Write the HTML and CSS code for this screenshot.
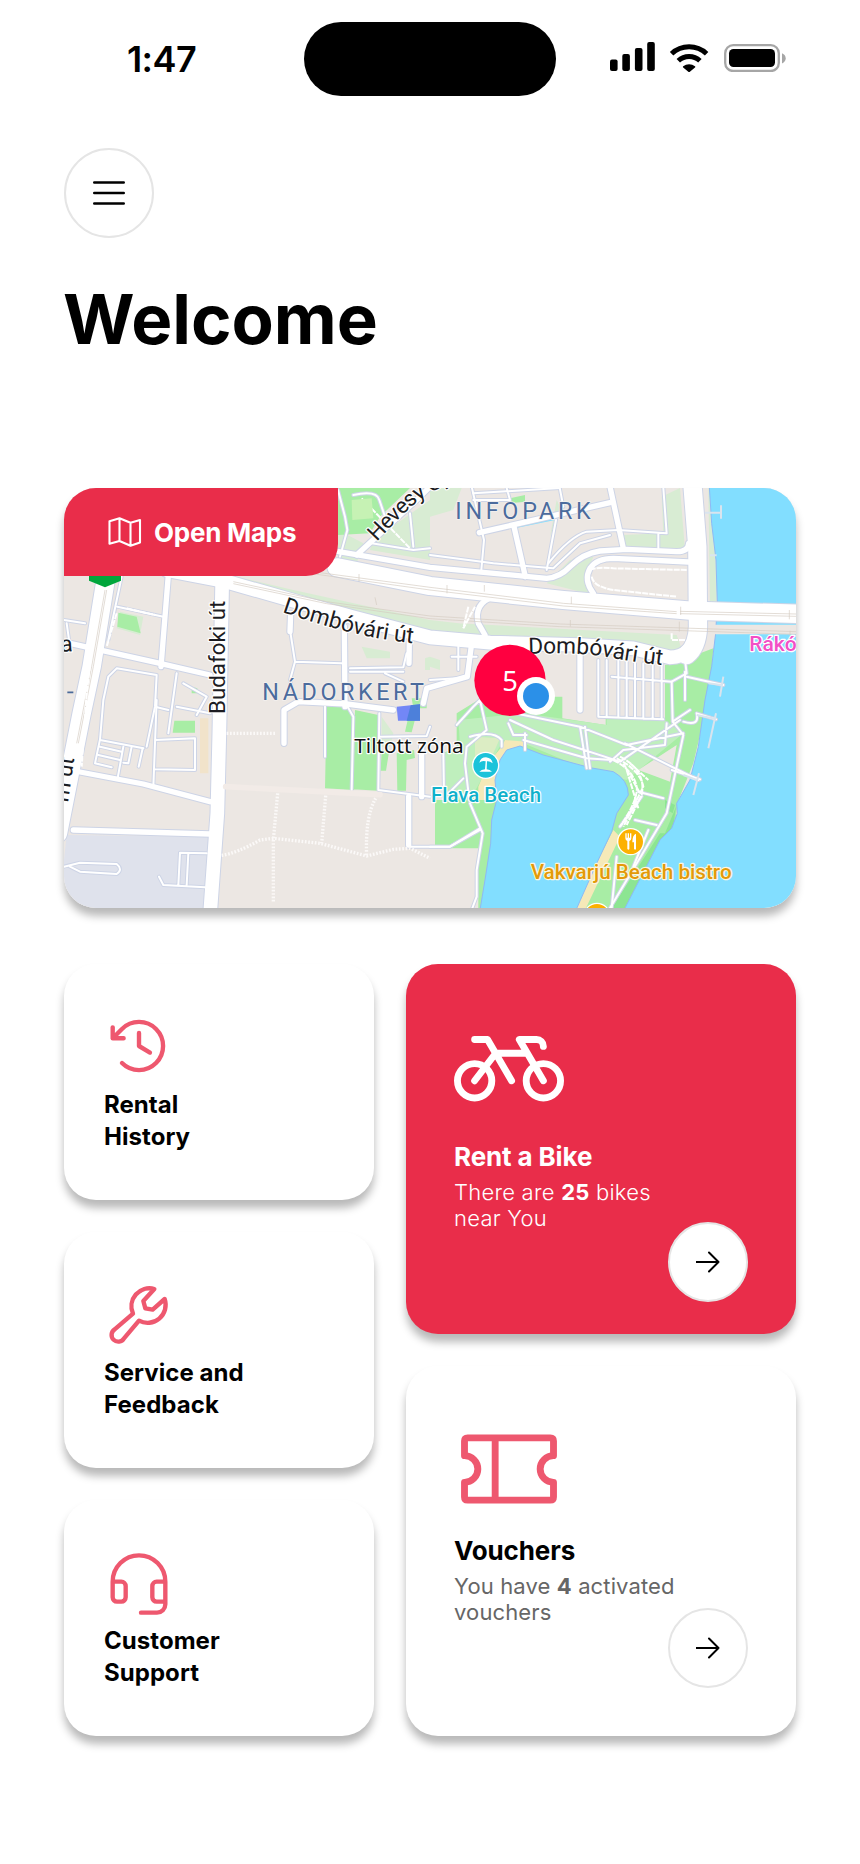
FILE: index.html
```html
<!DOCTYPE html>
<html lang="en">
<head>
<meta charset="utf-8">
<title>Welcome</title>
<link rel="stylesheet" href="styles.css">
</head>
<body>
<div class="screen">
  <header class="status">
    <span class="time">1:47</span>
    <span class="island"></span>
    <svg class="status-icons" viewBox="0 0 176 30" aria-hidden="true">
      <rect x="0" y="17.5" width="7.6" height="11.5" rx="2"/><rect x="12.3" y="12" width="7.6" height="17" rx="2"/><rect x="24.9" y="6" width="7.6" height="23" rx="2"/><rect x="37.2" y="0" width="7.6" height="29" rx="2"/>
      <g class="wifi"><path d="M61.6 11.8a25.5 25.5 0 0 1 35 0"/><path d="M68.3 18.8a15.8 15.8 0 0 1 21.6 0"/></g>
      <path d="M73.2 24.3a9.2 9.2 0 0 1 11.8 0q.6.6 0 1.2l-5.1 4.2q-.8.7-1.6 0l-5.1-4.2q-.6-.6 0-1.2z"/>
      <rect class="shell" x="115.2" y="3.2" width="53.6" height="25.8" rx="8"/><rect x="119" y="7" width="46" height="18" rx="4.5"/><path class="nub" d="M172 11.2v10.2q3.7-1.6 3.7-5.1t-3.7-5.1z"/>
    </svg>
  </header>

  <button class="round menu" aria-label="Menu">
    <svg viewBox="0 0 32 26"><path d="M1.3 2.5h29.4M1.3 13h29.4M1.3 23.5h29.4"/></svg>
  </button>
  <h1>Welcome</h1>

  <section class="map">
    <svg class="map-art" viewBox="12 24 2196 1260" preserveAspectRatio="none">
      <defs>
        <g id="streets">
          <path class="s3" d="M145 250L95 560L65 700L-6 1060"/>
          <path class="s2" d="M487 280L483 500L478 760L472 1000L451 1290"/>
          <path class="s2" d="M320 270L500 305L700 362L880 412L1110 472L1290 488L1560 495L1720 505L1830 532Q1900 530 1910 450"/>
          <path class="s3" d="M1897 10L1912 200L1914 440Q1912 500 1880 525"/>
          <path class="s3" d="M830 262L1110 318L1510 360L1890 392L2230 402"/>
          <path class="s1" d="M780 205L1110 262L1460 295Q1500 292 1530 260Q1570 220 1620 213L1700 208L1850 215Q1885 215 1886 190"/>
          <path class="s1" d="M1885 246L1660 235Q1610 235 1590 265Q1570 300 1600 340"/>
          <path class="s1" d="M890 225L1080 50L1120 10"/>
          <path class="s1" d="M1258 158L1650 68"/><path class="s1" d="M1362 140L1396 290"/><path class="s1" d="M1650 20L1690 205"/>
          <path class="s0" d="M1235 20L1272 180L1264 270"/><path class="s0" d="M1340 24L1350 60L1240 60M1240 40L1500 24"/>
          <path class="s0" d="M1500 28L1510 80M1488 120L1460 270"/>
          <path class="s0" d="M1110 225L1300 250L1480 265L1560 190L1650 165"/><path class="s0" d="M1465 250Q1530 170 1580 155L1675 150L1820 160L1810 24M1795 158L1795 205"/>
          <path class="s0" d="M834 30L855 110L862 150L840 230M880 45Q950 30 958 60L975 110M935 190L1060 210L1110 205M1050 100L1060 200"/>
          <path class="s1" d="M325 285L303 560"/><path class="s0" d="M185 290L145 480M172 380L310 410"/>
          <path class="s1" d="M30 490L290 548L450 585"/>
          <path class="s0" d="M12 420L75 430M20 430L30 500M145 590L170 565L290 585L285 680L260 800M145 590L130 660L120 780L250 805M350 580L325 760M285 680L325 690M350 680L450 700M370 610L440 650L410 705"/>
          <path class="s0" d="M120 778L105 850L155 862M120 800L185 815M115 825L180 840M190 800L172 900M215 800L205 850L190 848M248 805L236 860M290 660L280 920M285 780L405 775L405 870L285 868"/>
          <path class="s1" d="M60 876L250 912L450 965"/><path class="s1" d="M40 1050L450 1062"/>
          <path class="s0" d="M12 1160L60 1148L170 1152Q190 1168 170 1182L60 1175L30 1160M355 1215L360 1118L440 1120M385 1120L380 1215M297 1190L310 1215L435 1222"/>
          <path class="s1" d="M692 400L690 455"/><path class="s0" d="M690 450L705 545L845 550M705 545L690 600L700 640"/>
          <path class="s1" d="M853 440L855 680"/><path class="s1" d="M1048 480L1047 550"/>
          <path class="s0" d="M870 575L1030 575M870 565L1030 562L1040 520M975 580L1030 605"/>
          <path class="s1" d="M672 790L672 690L715 665L860 672L1000 690"/><path class="s0" d="M860 675L880 710L875 930"/>
          <path class="s0" d="M795 680L795 830M958 700L955 930L1110 950M960 770L1100 768L1110 740"/>
          <path class="s1" d="M1085 800L1085 950M1046 950L1046 1095"/><path class="s0" d="M1050 1100L1170 1100L1260 1045"/>
          <path class="s1" d="M1235 490L1222 590L1100 625L1090 670"/><path class="s0" d="M1175 530L1250 530M1195 500L1195 570M1110 600L1190 595"/>
          <path class="s1" d="M1560 520L1560 690"/><path class="s1" d="M1300 350Q1240 370 1255 430L1275 465"/>
          <path class="s0" d="M1615 540V710M1640 540V710M1675 540V712M1700 540V714M1725 550V714M1750 550V716M1778 550V716M1805 550V716M1655 590L1835 605M1615 710L1810 718"/>
          <path class="s0" d="M1875 540L1880 580L1835 605L1838 725L1870 765L1820 1000L1650 1284M1870 725Q1920 740 1910 700L1968 718M1875 575V660M1838 725L1890 690M1880 590L1990 615"/>
          <path class="s0" d="M1190 735L1240 680L1260 660L1280 750L1220 800L1215 850L1228 960M1365 700L1560 740L1700 795L1870 760M1350 720L1480 780L1680 845L1860 720M1395 760L1395 810M1390 780L1580 835L1655 840M1560 740L1580 865M1575 740L1590 865M1695 790L1915 900M1820 730L1815 795L1690 810M1690 810L1650 845M1230 770Q1300 750 1325 780L1325 800M1345 730L1360 765L1400 765"/>
          <path class="s0" d="M1150 820L1152 950M1230 970L1268 1060L1250 1170L1250 1250L1235 1290M1110 1100L1170 1100L1260 1050M1165 940L1210 895M1835 870L1920 898M1735 935L1810 955M1725 1020L1790 1035M1680 1040L1745 950M1670 1130L1655 1284M1765 1050L1720 1160"/>
        </g>
      </defs>
      <rect class="land" x="0" y="0" width="2220" height="1300"/>
      <g class="pale">
        <path d="M1110 24L1205 24L1180 90L1110 110ZM834 150L910 190L880 280L834 260ZM940 180L1110 60V240L930 210ZM1805 50L1860 24L1875 210L1695 200L1690 165L1810 160ZM1600 230L1530 240L1460 310L1600 345L1575 290ZM510 285L700 330L1110 420L1290 440L1110 465L700 375L520 315ZM1110 425L1850 465L1870 520L1600 490L1290 478L1110 455ZM1945 24H1955L1970 300V380H1950ZM1470 170L1490 60L1500 80Z"/>
        <path d="M180 395L250 410L240 465L170 445ZM905 500L990 515V535H920ZM1095 535L1110 530V570H1095ZM965 710L1000 760L990 800L965 800ZM300 1095L420 1090V1105H310ZM1110 530L1140 540V570L1110 560Z"/>
      </g>
      <path class="industrial" d="M20 1065L450 1070L435 1290H12V1140Z"/>
      <path class="sand-soft" d="M420 715H445V880H420Z"/>
      <g class="park">
        <path d="M834 24H1050L960 110L930 160L834 165Z"/>
        <path d="M175 398L230 410L242 460L172 440ZM343 722H405V758H338ZM1350 55L1395 45V65L1350 70ZM395 620L412 625V640H395Z"/>
        <path d="M800 675L862 675L882 715V930L795 925ZM885 690L955 705L955 932L880 928ZM965 810H988L978 872H962ZM1010 820L1062 810L1065 834L1040 840L1038 932H1012ZM1050 690L1070 700L1055 757L1035 755ZM1055 655H1100V685H1060Z"/>
        <path d="M1190 700L1270 650H1507V715L1637 735V717H1815V555L1845 548L1960 505L1950 640L1900 850L1852 970L1848 1020L1695 1290H1255V1105H1125V960H1150V820L1190 800Z"/>
      </g>
      <path class="meadow" d="M1195 720L1390 700L1640 735V718L1810 717L1870 760L1700 900L1560 860L1390 790L1330 780L1230 960L1150 960V820L1200 800Z"/>
      <path class="deep" d="M1800 1060H1815L1848 980L1840 1040L1700 1284H1655ZM1815 960L1845 975L1838 1000L1815 985Z"/>
      <path class="land" d="M1735 870L1850 795L1830 905L1790 890ZM1608 535H1812V717H1608Z"/>
      <path class="sand" d="M1255 920L1285 850L1325 800L1335 780L1400 785L1395 800L1330 835L1310 960H1255ZM1660 1050L1680 1070L1575 1290H1540Z"/>
      <path class="grove" d="M1245 770L1320 775L1300 820L1245 830Z"/>
      <path class="water" d="M1948 20L1955 130L1968 240L1972 370L1967 460L1955 560L1935 660L1915 800L1890 900L1850 970L1852 1000L1835 1045L1800 1080L1692 1290H2220V20Z"/>
      <path class="water" d="M1260 1290L1275 1200L1292 1090L1295 1020L1310 960L1305 900L1320 840L1340 810L1380 798L1450 825L1590 863L1660 875Q1705 900 1705 945L1670 1000L1655 1055L1610 1150L1548 1290Z"/>
      <path class="water plain" d="M1365 130L1485 108V120L1365 145Z"/>
      <path class="land" d="M1955 434H2220V463H1955Z"/>
      <use href="#streets" class="casing"/>
      <use href="#streets" class="fill"/>
      <path class="rail" d="M135 330L95 560L50 790M140 330L100 560L55 790M720 270L1110 322L1510 370L1850 395M720 276L1110 330L1510 378L1850 401M1860 394L2208 402M1860 401L2208 409M520 305L800 365L1110 408L1500 432L2208 455M520 311L800 371L1110 416L1500 440L2208 463M897 282V305M1161 315V340M1273 315V335M1534 350V372M1862 380V405M2188 390V418M945 352L950 375M1531 420V440M1858 425V455M2190 452V470"/>
      <path class="lane" d="M497 920L960 944"/>
      <g class="footway">
        <path d="M500 760H650M653 940L640 1080V1270M797 947L785 1090M947 955Q915 1010 920 1130M485 1126Q530 1120 600 1080L640 1075L780 1090L920 1128L1000 1108L1050 1105L1110 1135"/>
      </g>
      <path class="hatch" d="M200 385L285 405M105 430L80 640L65 860M170 400L140 500M905 55L1050 205M1590 270Q1610 260 1660 265L1880 270M1595 290Q1600 320 1660 330L1850 350M1225 380L1210 445L1245 380M1835 460V480H1875M1670 835Q1740 870 1750 920L1690 1040M1680 830Q1760 870 1745 945L1700 1035M1660 840Q1720 870 1730 920Q1735 960 1680 1040M1690 850L1740 940M1710 850L1765 900M1700 870L1735 985"/>
      <path class="pier" d="M1935 98H1985M1983 76V116M1950 226H1970M1945 610L1985 615M1990 590L1980 650M1910 705L1968 717M1968 700L1945 805M1870 885L1910 900M1917 880L1900 945"/>
      <path class="lawn" d="M875 60L935 55L940 115L877 120Z"/>
      <path class="restricted" d="M1010 680L1080 673V722L1014 722Z"/><path class="restricted-park" d="M1052 676L1080 673V722H1040Z"/>
      <path class="shield" d="M87 280H183V302L135 322L87 302Z"/>

      <defs>
        <path id="domb-west" d="M666 396Q770 432 870 457T1080 492"/>
        <path id="domb-east" d="M1405 522Q1560 516 1640 531T1820 557"/>
        <path id="hevesy" d="M950 185Q1020 110 1060 75T1240 -30"/>
      </defs>
      <g class="label street">
        <text><textPath href="#domb-west" textLength="405">Dombóvári út</textPath></text>
        <text><textPath href="#domb-east" textLength="404">Dombóvári út</textPath></text>
        <text class="tight"><textPath href="#hevesy">Hevesy Gy</textPath></text>
        <text transform="translate(494 702) rotate(-90)" textLength="340" lengthAdjust="spacingAndGlyphs">Budafoki út</text>
        <text transform="translate(2 516) rotate(-4)">a</text>
        <text transform="translate(24 968) rotate(-82)" textLength="135">m út</text>
      </g>
      <path class="dash" d="M22 637H40"/>
      <g class="label district">
        <text x="1186" y="116" textLength="406">INFOPARK</text>
        <text x="607" y="660" textLength="485">NÁDORKERT</text>
      </g>
      <text class="label zone" x="883" y="818" textLength="328" lengthAdjust="spacingAndGlyphs">Tiltott zóna</text>
      <text class="label transit" x="2068" y="512">Rákóczi</text>
      <text class="label beach" x="1113" y="967" textLength="330" lengthAdjust="spacingAndGlyphs">Flava Beach</text>
      <text class="label food" x="1412" y="1197" textLength="603" lengthAdjust="spacingAndGlyphs">Vakvarjú Beach bistro</text>

      <circle class="poi poi-beach" cx="1277" cy="856" r="39"/>
      <path class="poi-glyph" d="M1258 848Q1262 832 1278 832Q1296 834 1298 850Q1288 842 1281 844L1280 868Q1290 869 1296 875H1258Q1264 869 1275 868L1277 844Q1266 840 1258 848Z"/>
      <circle class="poi poi-food" cx="1712" cy="1085" r="39"/>
      <path class="poi-glyph" d="M1696 1060v15q0 7 6 8v24q4 4 6 0v-24q6-1 6-8v-15h-4v13h-3v-13h-4v13h-3v-13zM1728 1061q-11 4-11 26h5v20q4 4 6 0z"/>
      <circle class="poi poi-food" cx="1611" cy="1309" r="39"/>
      <circle class="cluster" cx="1350" cy="601" r="107"/>
      <text class="cluster-count" x="1350" y="632">5</text>
      <circle class="me-ring" cx="1428" cy="648" r="57"/><circle class="me" cx="1428" cy="648" r="39"/>
    </svg>
    <a class="open-maps">
      <svg viewBox="0 0 34 32"><path d="M1.5 5.2L11.5 2.2L22.5 6.8L32 4V26.5L22.5 29.8L11.5 25L1.5 27.8ZM11.5 2.2V25M22.5 6.8V29.8"/></svg>
      <span>Open Maps</span>
    </a>
  </section>

  <main class="cards">
    <div class="col">
      <article class="card small">
        <svg class="icon" viewBox="0 0 256 256"><path d="M128 80v48l40 24M71.8 99.7h-40v-40M65.8 190.2a88 88 0 1 0 0-124.4L31.8 99.7"/></svg>
        <h2>Rental<br>History</h2>
      </article>
      <article class="card small">
        <svg class="icon wide-box" viewBox="132 177 210 210"><path d="M283 207L250 243L256 265L278 269L314 237A54 54 0 0 1 237 302L192 355A20 20 0 1 1 164 328L219 281A54 54 0 0 1 283 207Z"/></svg>
        <h2>Service and<br>Feedback</h2>
      </article>
      <article class="card small">
        <svg class="icon wide-box" viewBox="132 171 210 210"><path d="M158 275A79 79 0 0 1 316 275V343a25 25 0 0 1-25 25H243M158 275H184a13 13 0 0 1 13 13V322a13 13 0 0 1-13 13H171a13 13 0 0 1-13-13ZM316 275H290a13 13 0 0 0-13 13V322a13 13 0 0 0 13 13H316"/></svg>
        <h2>Customer<br>Support</h2>
      </article>
    </div>
    <div class="col">
      <article class="card large rent">
        <svg class="icon" viewBox="0 0 256 256"><circle cx="208" cy="160" r="40"/><circle cx="48" cy="160" r="40"/><path d="M48 64H78L134 160M48 160L97 96H170M208 160L152 64H192a16 16 0 0 1 16 16"/></svg>
        <div class="row">
          <div class="copy"><h3>Rent a Bike</h3><p>There are <b>25</b> bikes<br>near You</p></div>
          <button class="round go" aria-label="Rent a bike"><svg viewBox="0 0 24 22"><path d="M.5 11H22.5M13 1.5L22.5 11L13 20.5"/></svg></button>
        </div>
      </article>
      <article class="card large vouchers">
        <svg class="icon wide-box" viewBox="162 162 330 330"><path d="M193.500 287V243Q193.500 233.500 203 233.500H451Q460.500 233.500 460.500 243V287A40 40 0 0 0 460.500 367V411Q460.500 420.500 451 420.500H203Q193.500 420.500 193.500 411V367A40 40 0 0 0 193.500 287ZM285.500 233.500V420.500"/></svg>
        <div class="row">
          <div class="copy"><h3>Vouchers</h3><p>You have <b>4</b> activated<br>vouchers</p></div>
          <button class="round go" aria-label="View vouchers"><svg viewBox="0 0 24 22"><path d="M.5 11H22.5M13 1.5L22.5 11L13 20.5"/></svg></button>
        </div>
      </article>
    </div>
  </main>
</div>
</body>
</html>
```

FILE: styles.css
```css
* { box-sizing: border-box; }
body { margin: 0; background: #fff; color: #000; font-family: Inter, "Liberation Sans", sans-serif; }
h1, h2, h3, p { margin: 0; }
svg { display: block; }
.screen { width: 860px; height: 1864px; padding: 22px 64px 0; overflow: hidden; display: flex; flex-direction: column; align-items: flex-start; }

/* Status bar */
.status { width: 732px; height: 74px; display: grid; grid-template-columns: 240px 252px 240px; }
.time { padding: 15px 0 0 63px; font-size: 36px; line-height: 44px; font-weight: 600; letter-spacing: -.6px; }
.island { background: #000; border-radius: 37px; }
.status-icons { width: 176px; height: 30px; margin: 20px 0 0 54px; }
.wifi { fill: none; stroke: #000; stroke-width: 5; }
.shell { fill: none; stroke: #a6a6a6; stroke-width: 2.3; }
.nub { fill: #a6a6a6; }

.round { display: grid; place-items: center; padding: 0; border: 2px solid #e5e5e5; border-radius: 50%; background: #fff; }
.round svg { fill: none; stroke: #000; stroke-linecap: round; stroke-linejoin: round; }
.menu { width: 90px; height: 90px; margin-top: 52px; }
.menu svg { width: 32px; height: 26px; stroke-width: 2.6; }
h1 { margin: 40px 0 0 -1px; font-size: 69px; line-height: 82px; font-weight: 700; }

/* Map */
.map { width: 732px; height: 420px; margin-top: 128px; border-radius: 32px; overflow: hidden; display: grid; box-shadow: 0 8px 8px rgba(0,0,0,.28); isolation: isolate; }
.map-art, .open-maps { grid-area: 1 / 1; }
.map-art { width: 732px; height: 420px; }
.open-maps { z-index: 1; width: 274px; height: 88px; display: flex; align-items: center; gap: 12px; padding-left: 44px; background: #e92d4a; color: #fff; border-radius: 0 0 32px 0; font-size: 26px; font-weight: 700; letter-spacing: -.25px; }
.open-maps svg { width: 34px; height: 32px; fill: none; stroke: #fff; stroke-width: 2.1; stroke-linejoin: round; }
.land { fill: #ece7e3; }
.pale { fill: #d8ecd3; }
.industrial { fill: #dfe2ec; }
.sand-soft { fill: #f1e3ca; }
.park { fill: #a8eda5; }
.meadow { fill: #bfefbd; }
.deep { fill: #8ce592; }
.grove { fill: #dcedc4; }
.sand { fill: #f5e9b8; }
.lawn { fill: #c6f2b4; }
.water { fill: #82deff; stroke: #8db9f5; stroke-width: 3; }
.plain { stroke: none; }
.casing { --extra: 6px; stroke: #cdd4e6; }
.fill { --extra: 0px; stroke: #fff; }
#streets path { fill: none; stroke-linejoin: round; stroke-linecap: round; }
#streets .s0 { stroke-width: calc(6px + var(--extra)); }
#streets .s1 { stroke-width: calc(16px + var(--extra)); }
#streets .s2 { stroke-width: calc(41px + var(--extra)); }
#streets .s3 { stroke-width: calc(55px + var(--extra)); }
.rail { fill: none; stroke: #d5ccc1; stroke-width: 2; }
.lane { fill: none; stroke: #f2ebe7; stroke-width: 17; stroke-linecap: round; }
.footway { fill: none; stroke: #fbf9f8; stroke-width: 10; stroke-dasharray: 5 5; }
.hatch { fill: none; stroke: #fff; stroke-width: 6; stroke-dasharray: 18 3; }
.pier { fill: none; stroke: #d9e4ee; stroke-width: 6; }
.restricted { fill: #7387f6; }
.restricted-park { fill: #4d80da; }
.shield { fill: #00a63c; }
.dash { fill: none; stroke: #4a6a9a; stroke-width: 5; }
.label { font-family: Roboto, "Open Sans", sans-serif; paint-order: stroke; stroke: #fff; stroke-width: 7px; stroke-linejoin: round; }
.street { font-size: 68px; fill: #1c1c22; }
.tight { font-size: 66px; letter-spacing: -1.5px; }
.district { font-size: 70px; fill: #4b6b9d; stroke-width: 5px; stroke: #f4f1ef; }
.zone { font-family: "Noto Sans", sans-serif; font-size: 62px; fill: #111; }
.transit { font-size: 63px; font-weight: 500; fill: #f24fc6; }
.beach { font-size: 60px; font-weight: 500; fill: #10b1cb; }
.food { font-size: 61px; font-weight: 500; fill: #e39a08; stroke: #fbf5df; }
.poi { stroke: #fff; stroke-width: 4; }
.poi-beach { fill: #1bc3da; }
.poi-food { fill: #fcb100; }
.poi-glyph { fill: #fff; }
.cluster { fill: #ff0040; }
.cluster-count { font: 400 82px "Noto Sans", sans-serif; fill: #fff; text-anchor: middle; }
.me-ring { fill: #fff; }
.me { fill: #2b90e8; }

/* Cards */
.cards { width: 732px; margin-top: 56px; display: grid; grid-template-columns: 310px 390px; gap: 32px; }
.col { display: flex; flex-direction: column; gap: 32px; }
.card { background: #fff; border-radius: 32px; box-shadow: 0 8px 8px rgba(0,0,0,.28); }
.icon { fill: none; stroke: #ee586f; stroke-width: 16; stroke-linecap: round; stroke-linejoin: round; }
.small { height: 236px; padding: 47px 40px 0; }
.small .icon { width: 70px; height: 70px; }
.small .wide-box { stroke-width: 13.1; }
.small h2 { margin-top: 8px; font-size: 24px; line-height: 32px; font-weight: 700; letter-spacing: .05px; }
.large { height: 370px; padding: 48px 48px 32px; display: flex; flex-direction: column; }
.large .icon { width: 110px; height: 110px; }
.large .wide-box { stroke-width: 20.600; }
.row { flex: 1; display: flex; }
.copy { width: 214px; white-space: nowrap; }
.copy h3 { font-size: 26px; line-height: 32px; font-weight: 700; letter-spacing: -.12px; }
.copy p { margin-top: 6px; font-size: 22px; line-height: 26px; font-weight: 400; letter-spacing: .13px; }
.rent { background: #e92d4a; color: #fff; }
.rent .icon { stroke: #fff; }
.rent h3 { margin-top: 19px; }
.rent p { font-weight: 300; letter-spacing: .24px; }
.vouchers { padding-bottom: 48px; }
.vouchers h3 { margin-top: 11px; }
.vouchers p { color: #666; }
.copy b { font-weight: 700; }
.go { width: 80px; height: 80px; align-self: flex-end; }
.go svg { width: 24px; height: 22px; stroke-width: 2; }
```
